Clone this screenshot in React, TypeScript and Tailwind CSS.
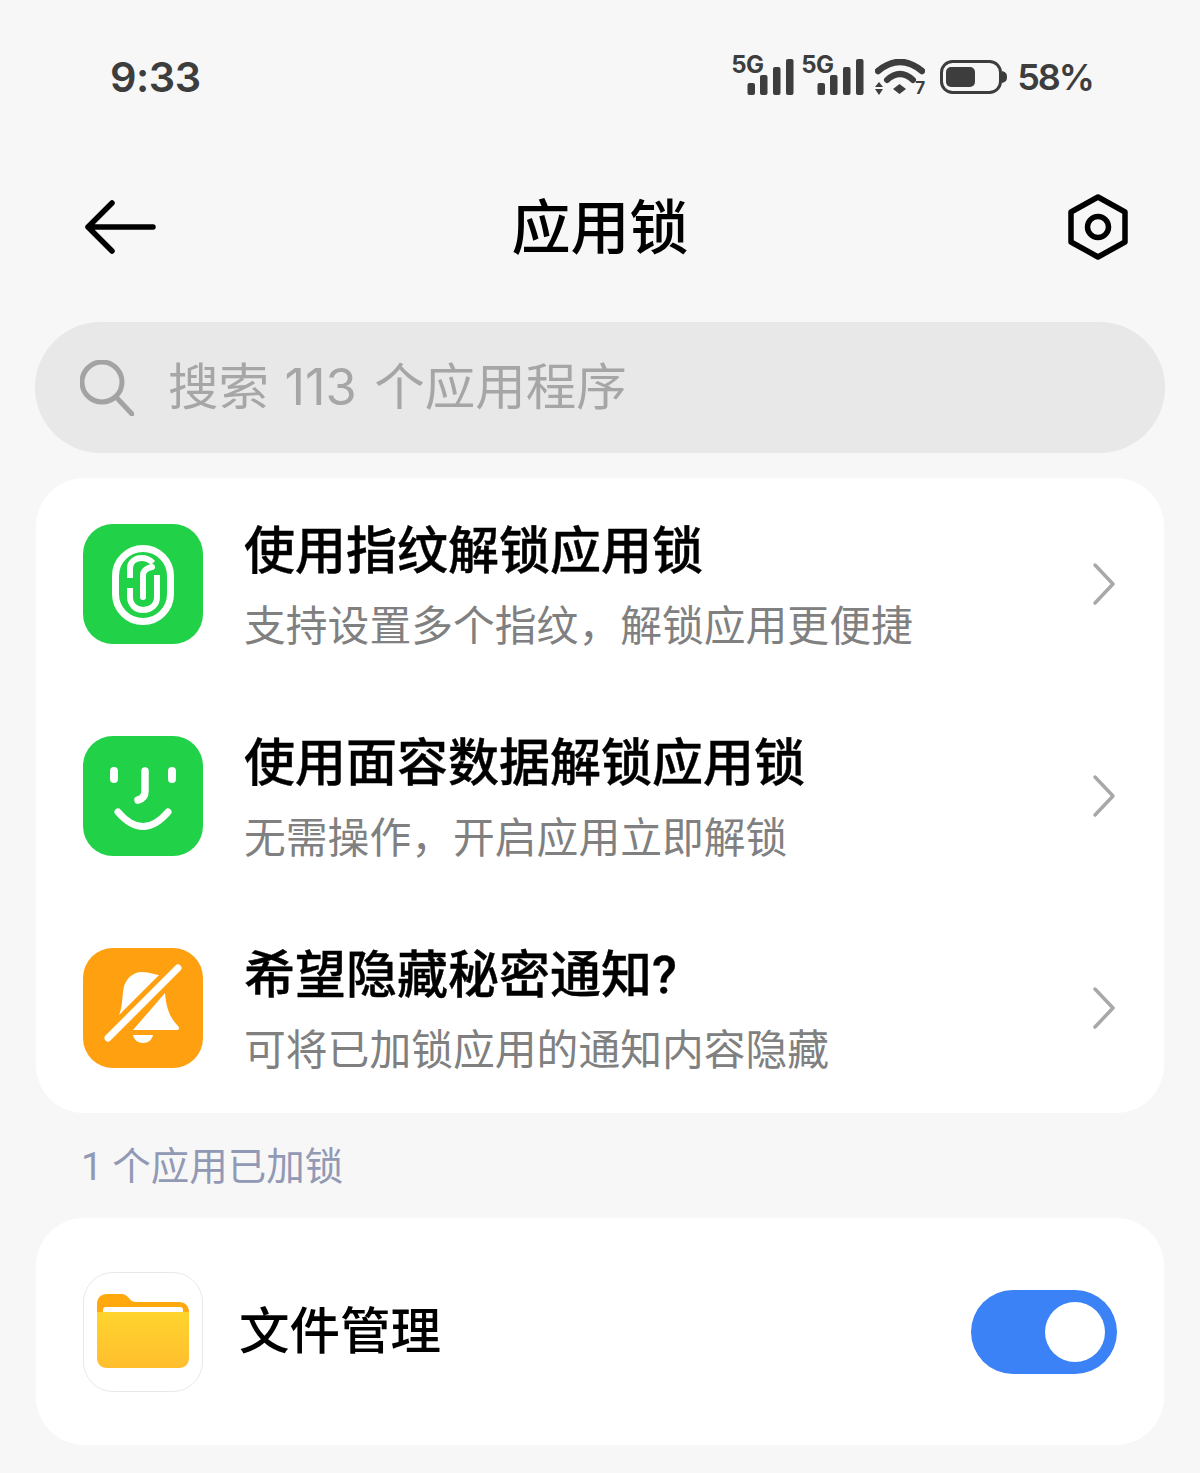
import React from "react"

const font = "font-['Roboto','Noto_Sans_CJK_SC',sans-serif]"

function SignalIcon() {
  return (
    <div className="relative w-[64px] h-[36px]">
      <span className="absolute left-0 top-[-8px] text-[24px] leading-[28px] font-bold text-[#3d3d3d] tracking-[-0.5px]">5G</span>
      <svg width="64" height="36" viewBox="0 0 64 36" className="absolute left-0 top-0" fill="#3d3d3d">
        <rect x="16.5" y="24" width="7.5" height="12" rx="2" />
        <rect x="29" y="16" width="7.5" height="20" rx="2" />
        <rect x="42" y="8" width="7.5" height="28" rx="2" />
        <rect x="55" y="0" width="7.5" height="36" rx="2" />
      </svg>
    </div>
  )
}

function StatusBar() {
  return (
    <div className="flex items-center justify-between pl-[110px] pr-[107px] pt-[50px] pb-[70px] h-[174px] font-['Inter','Roboto',sans-serif]">
      <span className="text-[41.5px] leading-[54px] font-semibold text-[#3d3d3d] tracking-[-0.5px]">9:33</span>
      <div className="flex items-center">
        <div className="flex gap-[6px]">
          <SignalIcon />
          <SignalIcon />
        </div>
        <div className="relative ml-[10px] w-[50px] h-[36px]">
          <svg width="50" height="36" viewBox="0 0 50 36" fill="none">
            <path d="M3 12Q25 -6 47 12" stroke="#3d3d3d" strokeWidth="6.5" strokeLinecap="round" />
            <path d="M12 21Q25 9 38 21" stroke="#3d3d3d" strokeWidth="6" strokeLinecap="round" />
            <path d="M18 30L24.5 25L31 30L24.5 35Z" fill="#3d3d3d" />
            <path d="M0 28L4 23L8 28ZM0 30H8L4 36Z" fill="#3d3d3d" />
          </svg>
          <span className="absolute right-0 top-[22px] text-[17px] leading-[14px] font-bold text-[#3d3d3d]">7</span>
        </div>
        <svg width="67" height="34" viewBox="0 0 67 34" className="ml-[15px]" fill="none">
          <rect x="1.5" y="1.5" width="59" height="31" rx="11" stroke="#3d3d3d" strokeWidth="3" />
          <rect x="6" y="7" width="29" height="20" rx="5" fill="#3d3d3d" />
          <path d="M62 11C66 12 67 14 67 17C67 20 66 22 62 23Z" fill="#3d3d3d" />
        </svg>
        <span className="ml-[10px] text-[36px] leading-[44px] font-semibold text-[#3d3d3d] tracking-[-2px]">58%</span>
      </div>
    </div>
  )
}

function Header() {
  return (
    <div className="flex items-center h-[148px] pl-[84px] pr-[72px] pb-[42px]">
      <div className="w-[72px] flex">
        <svg width="72" height="56" viewBox="0 0 72 56" fill="none" stroke="#000" strokeWidth="5.5" strokeLinecap="round" strokeLinejoin="round">
          <path d="M69 28H4M28 4L4 28L28 52" />
        </svg>
      </div>
      <h1 className="flex-1 pr-[24px] pt-[4px] text-center text-[59px] leading-[70px] font-medium text-black">应用锁</h1>
      <svg width="60" height="66" viewBox="0 0 60 66" fill="none" stroke="#000" strokeWidth="5.5" strokeLinejoin="round">
        <path d="M30 3L57 18V48L30 63L3 48V18Z" />
        <circle cx="30" cy="33" r="10.5" />
      </svg>
    </div>
  )
}

function SearchBar() {
  return (
    <div className="mx-[35px] h-[131px] rounded-[66px] bg-[#e8e8e8] flex items-center pl-[45px]">
      <svg width="54" height="56" viewBox="0 0 54 56" fill="none" stroke="#a3a3a3" strokeWidth="5" strokeLinecap="round">
        <circle cx="22" cy="22" r="20" />
        <path d="M36 37L52 54" />
      </svg>
      <span className="ml-[34px] text-[50.5px] leading-[60px] text-[#a6a6a6] whitespace-pre">
        搜索 <span className="font-['Inter',sans-serif] ml-[3px] mr-[5px]">113</span> 个应用程序
      </span>
    </div>
  )
}

function FingerprintIcon() {
  return (
    <svg width="120" height="120" viewBox="0 0 120 120" fill="none" stroke="#fff" strokeLinecap="round">
      <rect x="32.5" y="24.5" width="55" height="73" rx="27.5" strokeWidth="7" />
      <path d="M47 54V44C47 38 52 34 59 34C64 34 67 36 70 39" strokeWidth="6" strokeLinecap="butt" />
      <path d="M47 64V73C47 81 53 86 60 86C68 86 74 81 74 73V51" strokeWidth="6" strokeLinecap="butt" />
      <path d="M60 73V51C60 47 64 44 69 43" strokeWidth="6" />
    </svg>
  )
}

function FaceIcon() {
  return (
    <svg width="120" height="120" viewBox="0 0 120 120" fill="none" stroke="#fff" strokeLinecap="round">
      <path d="M31 35V43M89 35V43" strokeWidth="8" />
      <path d="M62 35V55C62 60 59 63 55 64" strokeWidth="7.5" />
      <path d="M35 76Q60 105 85 76" strokeWidth="7" />
    </svg>
  )
}

function BellIcon() {
  return (
    <svg width="120" height="120" viewBox="0 0 120 120" fill="none">
      <path d="M36 67C39 60 39 54 40 44C41 32 49 24 59 24C67 24 72 27 76 27Z" fill="#fff" />
      <path d="M82 45C83 56 85 68 95 78C97 80 96 82 94 82H50Z" fill="#fff" />
      <path d="M50 87H70C69 92 65 95 60 95C55 95 51 92 50 87Z" fill="#fff" />
      <path d="M25 90L95 20" stroke="#fff" strokeWidth="7" strokeLinecap="round" />
    </svg>
  )
}

function FolderIcon() {
  return (
    <svg width="120" height="120" viewBox="0 0 120 120" className="shrink-0">
      <defs>
        <linearGradient id="folderFront" x1="0" y1="0" x2="0" y2="1">
          <stop offset="0" stopColor="#ffd42e" />
          <stop offset="1" stopColor="#ffbe2e" />
        </linearGradient>
      </defs>
      <path d="M14 32C14 26 18 22 24 22H38C42 22 44 24 46 26C48 29 50 30 54 30H96C102 30 106 34 106 40V60H14Z" fill="#ffa90f" />
      <rect x="20" y="35" width="80" height="12" rx="3" fill="#fff" />
      <path d="M14 40H106V86C106 92 102 96 96 96H24C18 96 14 92 14 86Z" fill="url(#folderFront)" />
    </svg>
  )
}

function Chevron() {
  return (
    <svg width="24" height="44" viewBox="0 0 24 44" fill="none" stroke="#a8a8a8" strokeWidth="3.5" strokeLinecap="round" strokeLinejoin="round">
      <path d="M3 3L21 22L3 41" />
    </svg>
  )
}

const rows = [
  { title: "使用指纹解锁应用锁", sub: "支持设置多个指纹\uFF0C解锁应用更便捷", bg: "bg-[#21d147]", icon: <FingerprintIcon /> },
  { title: "使用面容数据解锁应用锁", sub: "无需操作\uFF0C开启应用立即解锁", bg: "bg-[#21d147]", icon: <FaceIcon /> },
  { title: "希望隐藏秘密通知?", sub: "可将已加锁应用的通知内容隐藏", bg: "bg-[#ffa011]", icon: <BellIcon /> },
]

export default function App() {
  return (
    <div className={`w-[1200px] h-[1473px] overflow-hidden bg-[#f7f7f7] ${font}`}>
      <StatusBar />
      <Header />
      <SearchBar />

      <div className="mx-[36px] mt-[25px] rounded-[48px] bg-white h-[635px] flex flex-col">
        {rows.map((row) => (
          <div key={row.title} className="flex items-center h-[212px] pl-[47px] pr-[48px] shrink-0">
            <div className={`w-[120px] h-[120px] rounded-[30px] shrink-0 ${row.bg}`}>{row.icon}</div>
            <div className="ml-[41px] flex-1 pt-[5px]">
              <div className="text-[51px] leading-[60px] font-medium text-black [-webkit-text-stroke:0.4px_black]">{row.title}</div>
              <div className="mt-[20px] text-[41.8px] leading-[50px] text-[#808080]">{row.sub}</div>
            </div>
            <Chevron />
          </div>
        ))}
      </div>

      <div className="pl-[81px] mt-[30px] text-[38.5px] leading-[48px] text-[#9299b5] whitespace-pre">
        1 个应用已加锁
      </div>

      <div className="mx-[36px] mt-[27px] h-[227px] rounded-[48px] bg-white flex items-center pl-[47px] pr-[47px]">
        <div className="w-[120px] h-[120px] rounded-[30px] bg-white border border-[#e8e8e8] shrink-0 flex items-center justify-center">
          <FolderIcon />
        </div>
        <span className="ml-[36px] flex-1 text-[50.5px] leading-[60px] text-black font-medium">文件管理</span>
        <div className="w-[146px] h-[84px] rounded-[42px] bg-[#3b82f6] flex items-center justify-end pr-[12px]">
          <div className="w-[60px] h-[60px] rounded-full bg-white" />
        </div>
      </div>
    </div>
  )
}
